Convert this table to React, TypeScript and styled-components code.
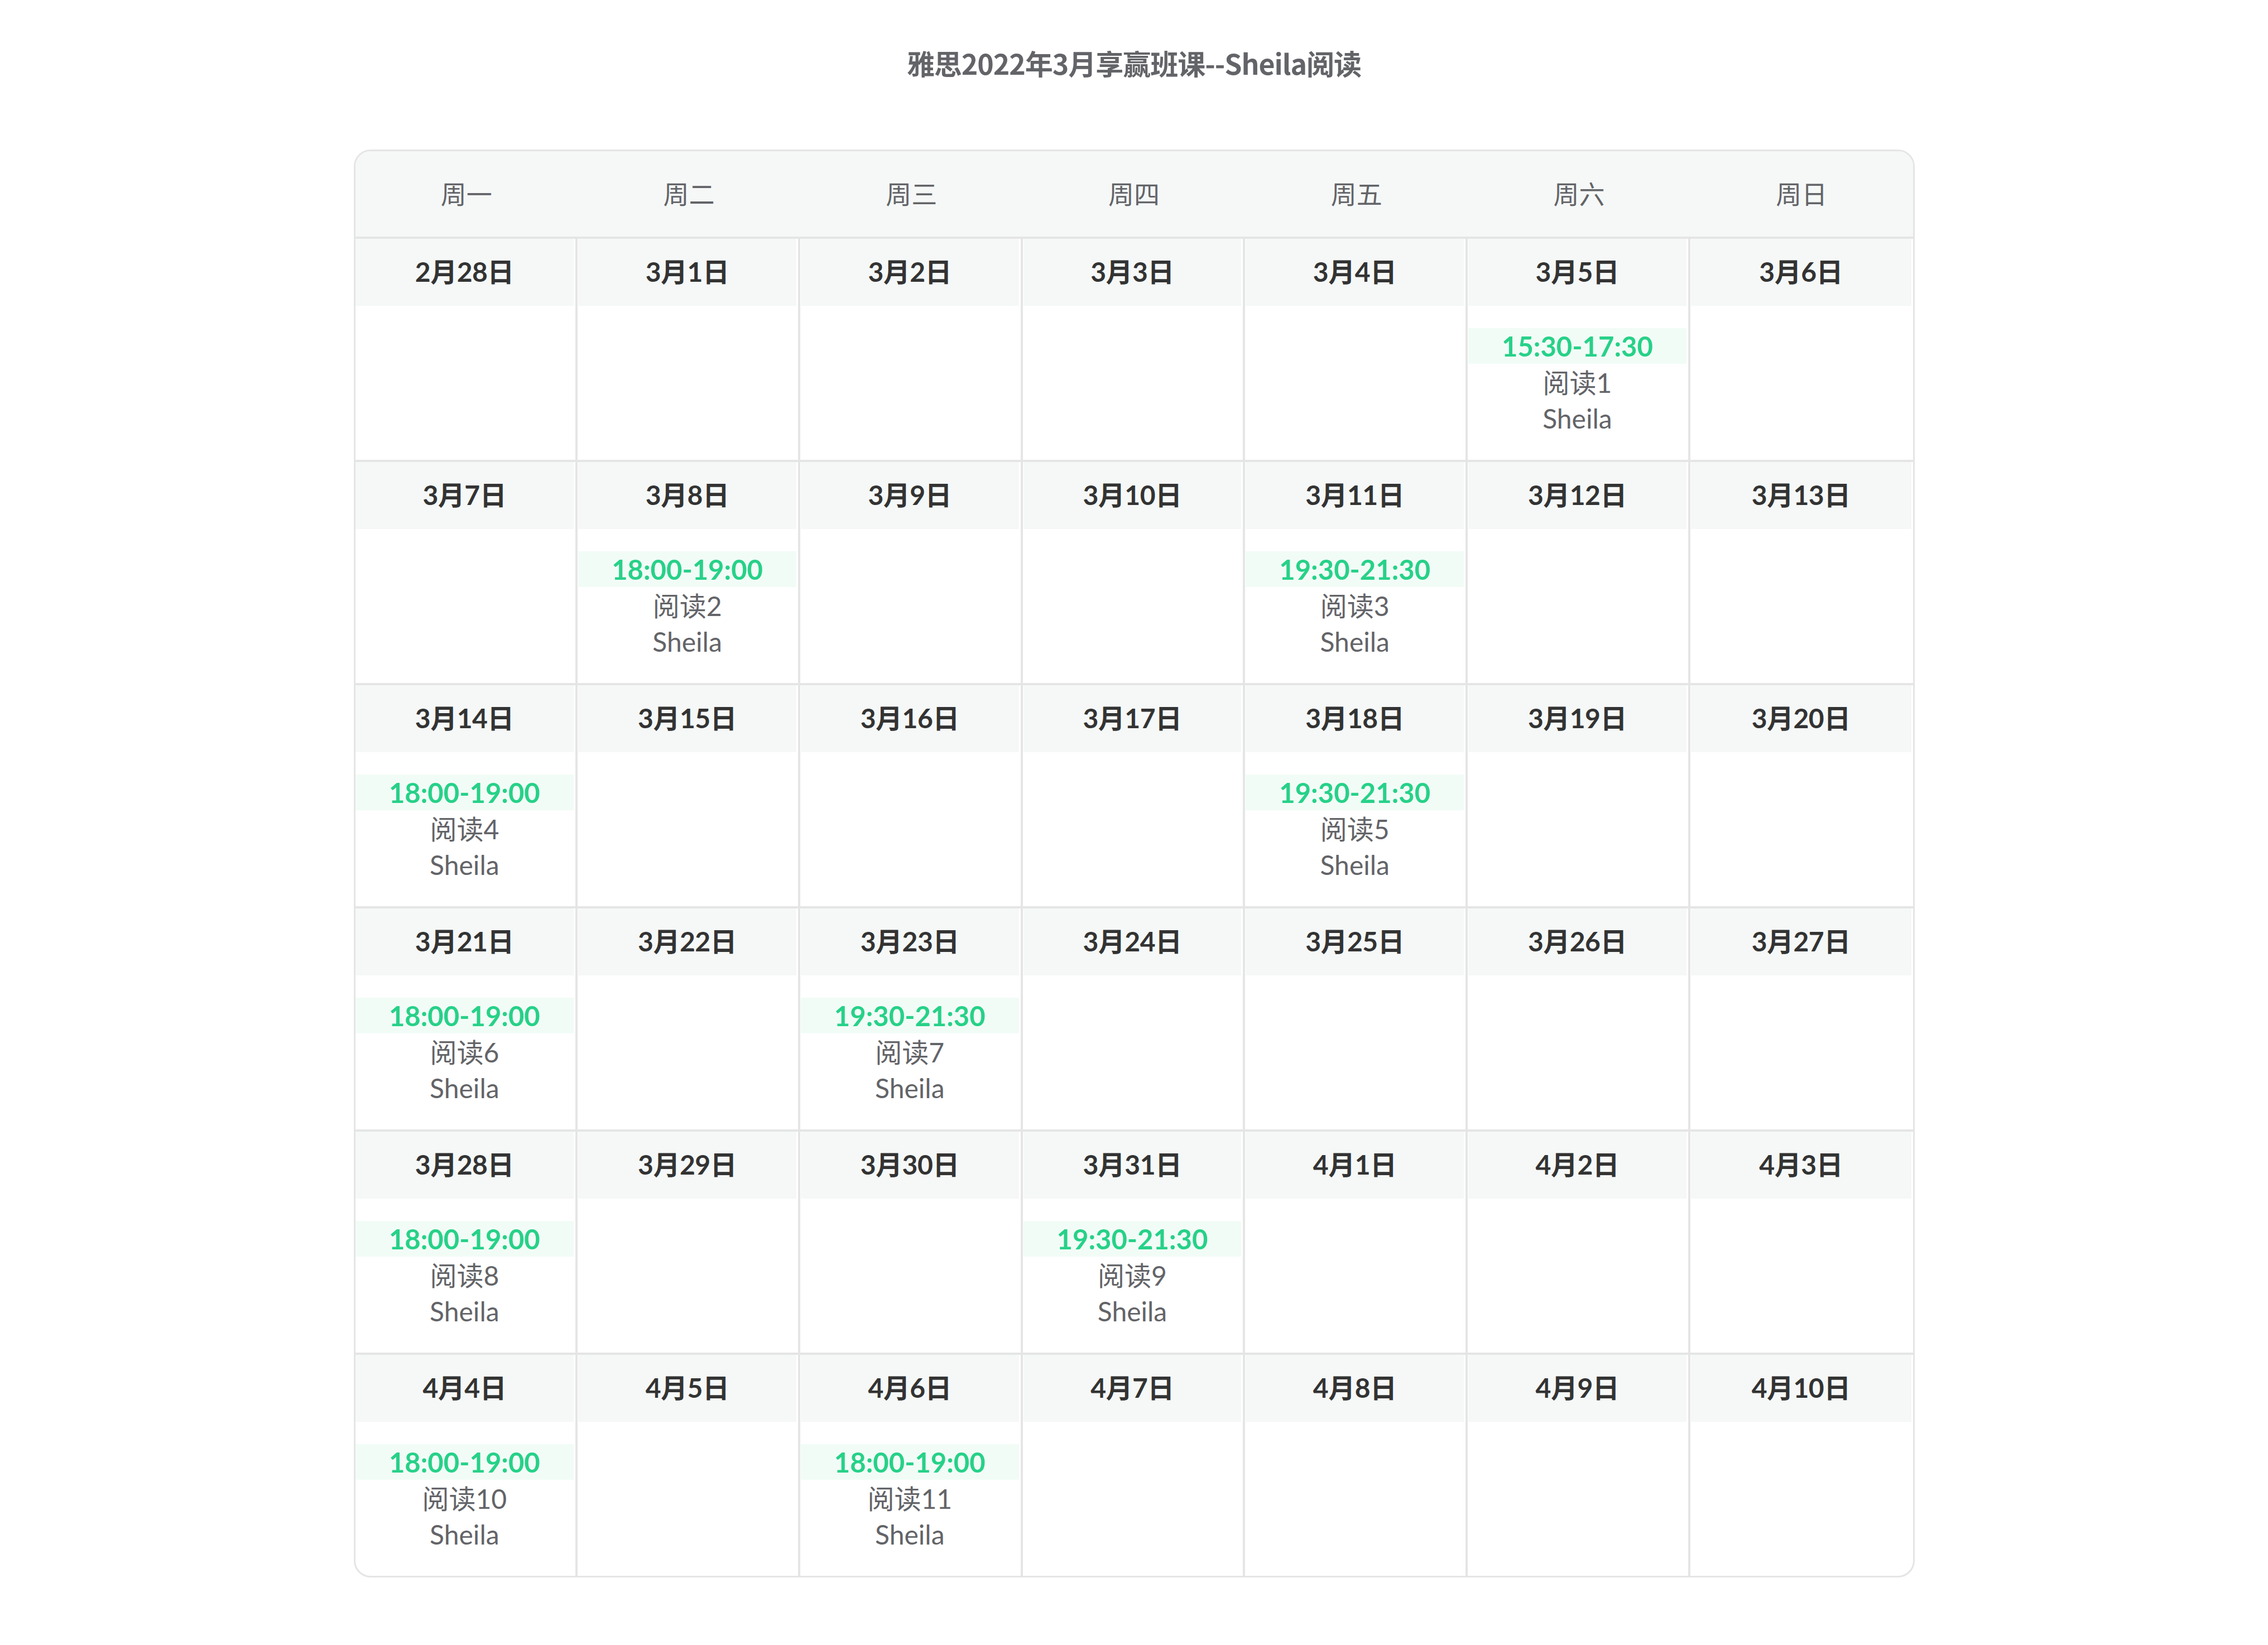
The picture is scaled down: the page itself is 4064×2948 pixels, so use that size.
import React from "react";
import styled, { createGlobalStyle } from "styled-components";

const GlobalStyle = createGlobalStyle`
  html, body { margin: 0; padding: 0; background: #ffffff; }
  body { font-family: Lato, "Noto Sans CJK SC", sans-serif; }
  * { box-sizing: border-box; }
`;

const Page = styled.div`
  display: flex;
  flex-direction: column;
  align-items: center;
  padding: 82px 0 120px;
`;

const Title = styled.h1`
  margin: 0 0 126px;
  height: 60px;
  line-height: 60px;
  font-family: "Noto Sans CJK SC", sans-serif;
  font-size: 50px;
  font-weight: 700;
  color: #636468;
  letter-spacing: -1px;
`;

const Calendar = styled.div`
  width: 2797px;
  border: 3px solid #e5e5e5;
  border-radius: 30px;
  overflow: hidden;
  background: #ffffff;
`;

const WeekHeader = styled.div`
  display: grid;
  grid-template-columns: repeat(7, 1fr);
  height: 157px;
  background: #f5f8f7;
  border-bottom: 4px solid #e5e5e5;
`;

const Weekday = styled.div`
  display: flex;
  align-items: center;
  justify-content: center;
  padding-bottom: 6px;
  font-family: "Noto Sans CJK SC", sans-serif;
  font-size: 46px;
  font-weight: 400;
  color: #636468;
`;

const WeekRow = styled.div`
  display: grid;
  grid-template-columns: repeat(7, 1fr);
  height: 400px;
  border-bottom: 4px solid #e5e5e5;
  &:last-child {
    height: 396px;
    border-bottom: none;
  }
`;

const Cell = styled.div`
  display: flex;
  flex-direction: column;
  padding: 0 3px 0 1px;
  border-right: 4px solid #e5e5e5;
  &:first-child {
    padding-left: 0;
  }
  &:last-child {
    border-right: none;
  }
`;

const DateHead = styled.div`
  height: 120px;
  line-height: 118px;
  background: #f5f8f7;
  text-align: center;
  font-family: Lato, "Noto Sans CJK SC", sans-serif;
  font-size: 48px;
  font-weight: 700;
  color: #333333;
  letter-spacing: -0.5px;
`;

const TimeBadge = styled.div`
  margin-top: 40px;
  height: 64px;
  line-height: 64px;
  background: #f2fcf7;
  text-align: center;
  font-family: Lato, "Noto Sans CJK SC", sans-serif;
  font-size: 49px;
  font-weight: 700;
  color: #27d188;
`;

const InfoLine = styled.div`
  height: 64px;
  line-height: 68px;
  text-align: center;
  font-family: Lato, "Noto Sans CJK SC", sans-serif;
  font-size: 48px;
  font-weight: 400;
  color: #636468;
`;

type Lesson = { time: string; name: string; teacher: string };
type Day = { label: string; lesson?: Lesson };

const weekdays = ["周一", "周二", "周三", "周四", "周五", "周六", "周日"];

const L = (time: string, name: string): Lesson => ({ time, name, teacher: "Sheila" });

const weeks: Day[][] = [
  [
    { label: "2月28日" },
    { label: "3月1日" },
    { label: "3月2日" },
    { label: "3月3日" },
    { label: "3月4日" },
    { label: "3月5日", lesson: L("15:30-17:30", "阅读1") },
    { label: "3月6日" },
  ],
  [
    { label: "3月7日" },
    { label: "3月8日", lesson: L("18:00-19:00", "阅读2") },
    { label: "3月9日" },
    { label: "3月10日" },
    { label: "3月11日", lesson: L("19:30-21:30", "阅读3") },
    { label: "3月12日" },
    { label: "3月13日" },
  ],
  [
    { label: "3月14日", lesson: L("18:00-19:00", "阅读4") },
    { label: "3月15日" },
    { label: "3月16日" },
    { label: "3月17日" },
    { label: "3月18日", lesson: L("19:30-21:30", "阅读5") },
    { label: "3月19日" },
    { label: "3月20日" },
  ],
  [
    { label: "3月21日", lesson: L("18:00-19:00", "阅读6") },
    { label: "3月22日" },
    { label: "3月23日", lesson: L("19:30-21:30", "阅读7") },
    { label: "3月24日" },
    { label: "3月25日" },
    { label: "3月26日" },
    { label: "3月27日" },
  ],
  [
    { label: "3月28日", lesson: L("18:00-19:00", "阅读8") },
    { label: "3月29日" },
    { label: "3月30日" },
    { label: "3月31日", lesson: L("19:30-21:30", "阅读9") },
    { label: "4月1日" },
    { label: "4月2日" },
    { label: "4月3日" },
  ],
  [
    { label: "4月4日", lesson: L("18:00-19:00", "阅读10") },
    { label: "4月5日" },
    { label: "4月6日", lesson: L("18:00-19:00", "阅读11") },
    { label: "4月7日" },
    { label: "4月8日" },
    { label: "4月9日" },
    { label: "4月10日" },
  ],
];

export default function App() {
  return (
    <>
      <GlobalStyle />
      <Page>
        <Title>雅思2022年3月享赢班课--Sheila阅读</Title>
        <Calendar>
          <WeekHeader>
            {weekdays.map((w) => (
              <Weekday key={w}>{w}</Weekday>
            ))}
          </WeekHeader>
          {weeks.map((week, i) => (
            <WeekRow key={i}>
              {week.map((day) => (
                <Cell key={day.label}>
                  <DateHead>{day.label}</DateHead>
                  {day.lesson && (
                    <>
                      <TimeBadge>{day.lesson.time}</TimeBadge>
                      <InfoLine>{day.lesson.name}</InfoLine>
                      <InfoLine>{day.lesson.teacher}</InfoLine>
                    </>
                  )}
                </Cell>
              ))}
            </WeekRow>
          ))}
        </Calendar>
      </Page>
    </>
  );
}
